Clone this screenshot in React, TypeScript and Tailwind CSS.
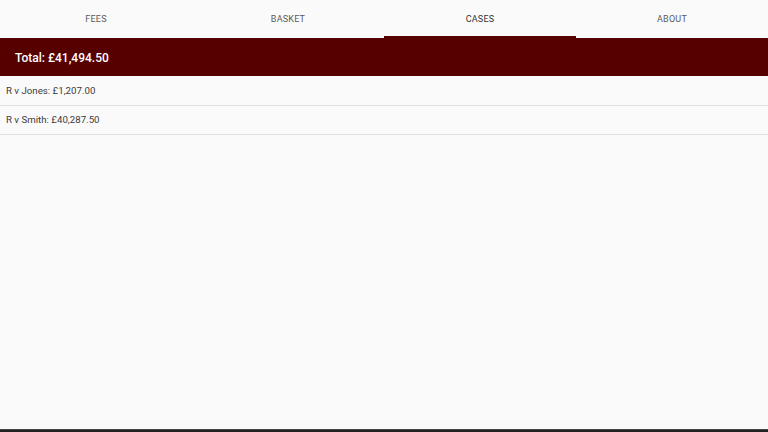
import { useState } from 'react';

const tabs = ['FEES', 'BASKET', 'CASES', 'ABOUT'];

const cases = [
    { name: 'R v Jones', amount: '£1,207.00' },
    { name: 'R v Smith', amount: '£40,287.50' },
];

export default function App() {
    const [active, setActive] = useState('CASES');

    return (
        <div className="h-[432px] w-full flex flex-col bg-[#fafafa] font-['Roboto',sans-serif] overflow-hidden">
            {/* Tabs */}
            <div className="flex h-[38px] shrink-0">
                {tabs.map((tab) => (
                    <button
                        key={tab}
                        onClick={() => setActive(tab)}
                        className={`flex-1 flex items-center justify-center pt-[3px] text-[9px] tracking-wide border-b-2 ${active === tab ? 'text-[#333] border-[#560000]' : 'text-[#5a5a5a] border-transparent'}`}
                    >
                        {tab}
                    </button>
                ))}
            </div>

            {/* Total */}
            <div className="h-[38px] shrink-0 bg-[#560000] flex items-center pt-[2px] px-[15px] text-white text-[12px] font-medium">
                Total: £41,494.50
            </div>

            {/* Case list */}
            <div className="flex-1">
                {cases.map((c) => (
                    <div key={c.name} className="h-[29.5px] flex items-center pt-[2px] px-[6px] text-[9.7px] text-[#3a3a3a] border-b border-[#e0e0e0]">
                        {c.name}: {c.amount}
                    </div>
                ))}
            </div>

            <div className="h-[3px] shrink-0 bg-[#222] border-t border-[#444]"></div>
        </div>
    );
}
